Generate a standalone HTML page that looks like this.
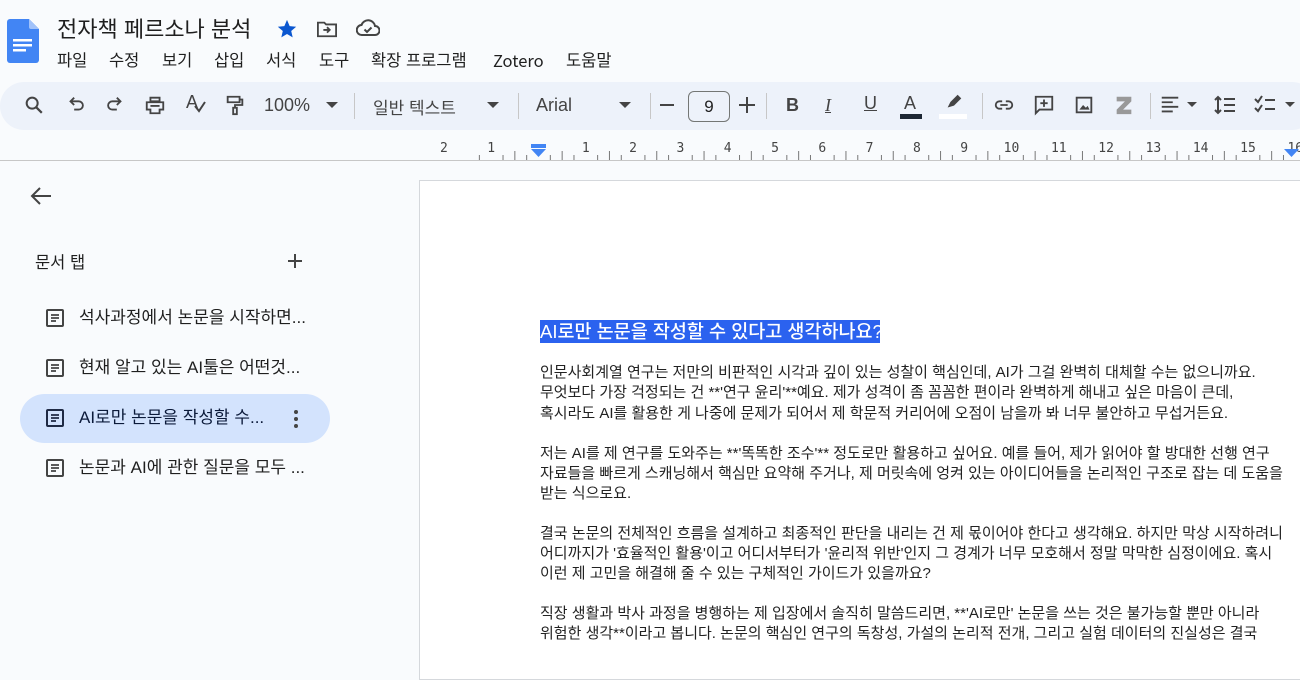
<!DOCTYPE html>
<html><head><meta charset="utf-8"><style>
*{margin:0;padding:0;box-sizing:border-box}
body{width:1300px;height:645px;overflow:hidden;background:#f9fbfd;font-family:"Liberation Sans","Noto Sans CJK KR",sans-serif;color:#1f1f1f;position:relative}
.abs{position:absolute}
.menu span{position:absolute;top:0;font-size:16.5px;line-height:22px;white-space:nowrap}
.tb{position:absolute;left:0;top:82px;width:1316px;height:48px;background:#edf2fa;border-radius:24px}
.ic{position:absolute;top:94px}
.sep{position:absolute;top:93px;width:1px;height:26px;background:#c7c7c7}
.tab{position:absolute;left:45px;font-size:17px;line-height:22px;white-space:nowrap;color:#1f1f1f}
.tab svg{position:absolute;left:0;top:1px}
.tab span{position:absolute;left:34px;top:0}
.ln{position:absolute;left:540px;font-size:15px;white-space:nowrap;letter-spacing:0;color:#222;line-height:20px}
</style></head><body>
<svg class="abs" style="left:7px;top:19px" width="32" height="44" viewBox="0 0 32 44"><path d="M3 0h19l10 10v31a3 3 0 0 1-3 3H3a3 3 0 0 1-3-3V3a3 3 0 0 1 3-3z" fill="#4285f4"/><path d="M22 0v8a2 2 0 0 0 2 2h8z" fill="#a1c2fa"/><rect x="6" y="20" width="19" height="2.5" fill="#fff"/><rect x="6" y="25" width="19" height="2.5" fill="#fff"/><rect x="6" y="30" width="13" height="2.5" fill="#fff"/></svg>
<div class="abs" style="left:57px;top:12px;font-size:22px;white-space:nowrap">전자책 페르소나 분석</div>
<svg class="abs" style="left:276px;top:18px" width="22" height="22" viewBox="0 0 24 24"><path d="M12 2l2.9 6.9 7.1.6-5.4 4.7 1.6 7-6.2-3.8-6.2 3.8 1.6-7L2 9.5l7.1-.6z" fill="#0b57d0"/></svg>
<svg class="abs" style="left:316px;top:19px" width="22" height="20" viewBox="0 0 24 22"><path d="M2 4h7l2 2h11v13H2z" fill="none" stroke="#444" stroke-width="2"/><path d="M8 12h7M12 9l3 3-3 3" fill="none" stroke="#444" stroke-width="2"/></svg>
<svg class="abs" style="left:356px;top:18px" width="24" height="20" viewBox="0 0 24 20"><path d="M6 17a5 5 0 0 1-.5-10A7 7 0 0 1 19 8a4.5 4.5 0 0 1 0 9z" fill="none" stroke="#444" stroke-width="2"/><path d="M8.5 11.5l2.5 2.5 4.5-4.5" fill="none" stroke="#444" stroke-width="2"/></svg>
<div class="menu abs" style="left:0;top:50px;width:700px;height:22px">
<span style="left:57px">파일</span><span style="left:109px">수정</span><span style="left:162px">보기</span><span style="left:214px">삽입</span><span style="left:266px">서식</span><span style="left:319px">도구</span><span style="left:371px">확장 프로그램</span><span style="left:493px;top:-1px;font-family:'Noto Sans CJK KR',sans-serif">Zotero</span><span style="left:566px">도움말</span>
</div>
<div class="tb"></div>
<svg class="ic" style="left:23px" width="22" height="22" viewBox="0 0 24 24"><circle cx="10" cy="10" r="6" fill="none" stroke="#444" stroke-width="2.2"/><path d="M14.5 14.5l6 6" stroke="#444" stroke-width="2.4"/></svg>
<svg class="ic" style="left:65px" width="22" height="22" viewBox="0 0 24 24"><path d="M7 8h8a4.5 4.5 0 0 1 0 9h-5" fill="none" stroke="#444" stroke-width="2"/><path d="M10 4L6 8l4 4" fill="none" stroke="#444" stroke-width="2"/></svg>
<svg class="ic" style="left:104px" width="22" height="22" viewBox="0 0 24 24"><path d="M17 8H9a4.5 4.5 0 0 0 0 9h5" fill="none" stroke="#444" stroke-width="2"/><path d="M14 4l4 4-4 4" fill="none" stroke="#444" stroke-width="2"/></svg>
<svg class="ic" style="left:144px" width="22" height="22" viewBox="0 0 24 24"><path d="M7 4h10v4H7zM3 9h18v8h-4v4H7v-4H3z" fill="none" stroke="#444" stroke-width="2"/><path d="M7 13h10" stroke="#444" stroke-width="2"/></svg>
<div class="abs" style="left:186px;top:92px;font-size:18px;color:#444">A</div>
<svg class="ic" style="left:193px;top:100px" width="14" height="14" viewBox="0 0 14 14"><path d="M2 6l4 5 6-9" fill="none" stroke="#444" stroke-width="2"/></svg>
<svg class="ic" style="left:224px" width="22" height="22" viewBox="0 0 24 24"><path d="M4 3h13v6H4zM17 6h3v6h-8v3" fill="none" stroke="#444" stroke-width="2"/><rect x="10" y="15" width="4" height="7" fill="none" stroke="#444" stroke-width="2"/></svg>
<div class="abs" style="left:264px;top:95px;font-size:18px;color:#444">100%</div>
<svg class="abs" style="left:326px;top:102px" width="12" height="7"><path d="M0 0h12L6 6z" fill="#444"/></svg>
<div class="sep" style="left:354px"></div>
<div class="abs" style="left:373px;top:94px;font-size:17px;color:#444">일반 텍스트</div>
<svg class="abs" style="left:487px;top:102px" width="12" height="7"><path d="M0 0h12L6 6z" fill="#444"/></svg>
<div class="sep" style="left:518px"></div>
<div class="abs" style="left:536px;top:95px;font-size:18px;color:#444">Arial</div>
<svg class="abs" style="left:619px;top:102px" width="12" height="7"><path d="M0 0h12L6 6z" fill="#444"/></svg>
<div class="sep" style="left:650px"></div>
<div class="abs" style="left:660px;top:104px;width:14px;height:2px;background:#444"></div>
<div class="abs" style="left:688px;top:91px;width:42px;height:31px;border:1px solid #747775;border-radius:6px;text-align:center;font-size:17px;line-height:29px;color:#1f1f1f">9</div>
<div class="abs" style="left:739px;top:104px;width:16px;height:2px;background:#444"></div>
<div class="abs" style="left:746px;top:97px;width:2px;height:16px;background:#444"></div>
<div class="sep" style="left:766px"></div>
<div class="abs" style="left:786px;top:95px;font-size:18px;font-weight:bold;color:#444">B</div>
<div class="abs" style="left:825px;top:95px;font-size:18px;font-style:italic;font-family:'Liberation Serif',serif;color:#444;text-decoration:underline">I</div>
<div class="abs" style="left:864px;top:93px;font-size:18px;color:#444;text-decoration:underline">U</div>
<div class="abs" style="left:904px;top:93px;font-size:18px;color:#444">A</div>
<div class="abs" style="left:900px;top:114px;width:22px;height:5px;background:#1d2733"></div>
<svg class="ic" style="left:943px;top:92px" width="22" height="20" viewBox="0 0 24 22"><path d="M5 17l3-6 8-8 4 4-8 8z" fill="#444"/></svg>
<div class="abs" style="left:939px;top:114px;width:28px;height:5px;background:#fff"></div>
<div class="sep" style="left:982px"></div>
<svg class="ic" style="left:993px" width="22" height="22" viewBox="0 0 24 24"><path d="M10 8H7a4 4 0 0 0 0 8h3M14 8h3a4 4 0 0 1 0 8h-3M8 12h8" fill="none" stroke="#444" stroke-width="2"/></svg>
<svg class="ic" style="left:1033px" width="22" height="22" viewBox="0 0 24 24"><path d="M3 3h18v14H7l-4 4z" fill="none" stroke="#444" stroke-width="2"/><path d="M12 6v8M8 10h8" stroke="#444" stroke-width="2"/></svg>
<svg class="ic" style="left:1073px" width="22" height="22" viewBox="0 0 24 24"><rect x="4" y="4" width="16" height="16" fill="none" stroke="#444" stroke-width="2"/><path d="M7 17l4-5 3 3 2-2 2 4z" fill="#444"/></svg>
<svg class="ic" style="left:1113px" width="22" height="22" viewBox="0 0 24 24"><path d="M4 3h16v5l-9 9h9v5H4v-5l9-9H4z" fill="#999"/></svg>
<div class="sep" style="left:1150px"></div>
<svg class="ic" style="left:1159px" width="22" height="22" viewBox="0 0 24 24"><path d="M3 4h18M3 9h12M3 14h18M3 19h12" stroke="#444" stroke-width="2"/></svg>
<svg class="abs" style="left:1187px;top:102px" width="10" height="6"><path d="M0 0h10L5 5z" fill="#444"/></svg>
<svg class="ic" style="left:1213px" width="24" height="22" viewBox="0 0 24 22"><path d="M5 3v16M2 6l3-3 3 3M2 16l3 3 3-3M11 5h11M11 11h11M11 17h11" fill="none" stroke="#444" stroke-width="2"/></svg>
<svg class="ic" style="left:1253px" width="24" height="22" viewBox="0 0 24 22"><path d="M2 5l3 3 4-6M2 14l3 3 4-6M12 6h10M12 15h10" fill="none" stroke="#444" stroke-width="2"/></svg>
<svg class="abs" style="left:1285px;top:102px" width="10" height="6"><path d="M0 0h10L5 5z" fill="#444"/></svg>
<div class="abs" style="left:0;top:160px;width:1300px;height:1px;background:#c7c7c7"></div>
<svg class="abs" style="left:0;top:135px" width="1300" height="26" id="rul"></svg>
<svg class="abs" style="left:30px;top:186px" width="22" height="20" viewBox="0 0 22 20"><path d="M21 10H3M10 2L2 10l8 8" fill="none" stroke="#444" stroke-width="2"/></svg>
<div class="abs" style="left:35px;top:249px;font-size:16.5px">문서 탭</div>
<div class="abs" style="left:288px;top:260px;width:14px;height:2px;background:#444"></div>
<div class="abs" style="left:294px;top:254px;width:2px;height:14px;background:#444"></div>
<div class="abs" style="left:20px;top:394px;width:310px;height:49px;background:#d3e3fd;border-radius:25px"></div>
<div class="tab" style="top:307px"><svg width="20" height="20" viewBox="0 0 20 20"><rect x="2" y="2" width="16" height="16" rx="1" fill="none" stroke="#444" stroke-width="2"/><path d="M6 7h8M6 10h8M6 13h5" stroke="#444" stroke-width="1.8"/></svg><span>석사과정에서 논문을 시작하면...</span></div>
<div class="tab" style="top:357px"><svg width="20" height="20" viewBox="0 0 20 20"><rect x="2" y="2" width="16" height="16" rx="1" fill="none" stroke="#444" stroke-width="2"/><path d="M6 7h8M6 10h8M6 13h5" stroke="#444" stroke-width="1.8"/></svg><span>현재 알고 있는 AI툴은 어떤것...</span></div>
<div class="tab" style="top:407px;color:#0b1a3a"><svg width="20" height="20" viewBox="0 0 20 20"><rect x="2" y="2" width="16" height="16" rx="1" fill="none" stroke="#1f2a44" stroke-width="2"/><path d="M6 7h8M6 10h8M6 13h5" stroke="#1f2a44" stroke-width="1.8"/></svg><span>AI로만 논문을 작성할 수...</span></div>
<svg class="abs" style="left:293px;top:409px" width="6" height="20"><circle cx="3" cy="3" r="2" fill="#444"/><circle cx="3" cy="10" r="2" fill="#444"/><circle cx="3" cy="17" r="2" fill="#444"/></svg>
<div class="tab" style="top:457px"><svg width="20" height="20" viewBox="0 0 20 20"><rect x="2" y="2" width="16" height="16" rx="1" fill="none" stroke="#444" stroke-width="2"/><path d="M6 7h8M6 10h8M6 13h5" stroke="#444" stroke-width="1.8"/></svg><span>논문과 AI에 관한 질문을 모두 ...</span></div>
<div class="abs" style="left:419px;top:180px;width:900px;height:500px;background:#fff;border:1px solid #d5d8dc"></div>
<div class="abs" style="left:540px;top:320px;width:340px;height:23px;background:#2b62ef"></div>
<div class="abs" style="left:540px;top:320px;font-size:18.5px;color:#fff;white-space:nowrap;line-height:23px;font-weight:500">AI로만 논문을 작성할 수 있다고 생각하나요?</div>
<div class="ln" style="top:363px">인문사회계열 연구는 저만의 비판적인 시각과 깊이 있는 성찰이 핵심인데, AI가 그걸 완벽히 대체할 수는 없으니까요.</div>
<div class="ln" style="top:383px">무엇보다 가장 걱정되는 건 **'연구 윤리'**예요. 제가 성격이 좀 꼼꼼한 편이라 완벽하게 해내고 싶은 마음이 큰데,</div>
<div class="ln" style="top:404px">혹시라도 AI를 활용한 게 나중에 문제가 되어서 제 학문적 커리어에 오점이 남을까 봐 너무 불안하고 무섭거든요.</div>
<div class="ln" style="top:444px">저는 AI를 제 연구를 도와주는 **'똑똑한 조수'** 정도로만 활용하고 싶어요. 예를 들어, 제가 읽어야 할 방대한 선행 연구</div>
<div class="ln" style="top:464px">자료들을 빠르게 스캐닝해서 핵심만 요약해 주거나, 제 머릿속에 엉켜 있는 아이디어들을 논리적인 구조로 잡는 데 도움을</div>
<div class="ln" style="top:484px">받는 식으로요.</div>
<div class="ln" style="top:524px">결국 논문의 전체적인 흐름을 설계하고 최종적인 판단을 내리는 건 제 몫이어야 한다고 생각해요. 하지만 막상 시작하려니</div>
<div class="ln" style="top:544px">어디까지가 '효율적인 활용'이고 어디서부터가 '윤리적 위반'인지 그 경계가 너무 모호해서 정말 막막한 심정이에요. 혹시</div>
<div class="ln" style="top:564px">이런 제 고민을 해결해 줄 수 있는 구체적인 가이드가 있을까요?</div>
<div class="ln" style="top:604px">직장 생활과 박사 과정을 병행하는 제 입장에서 솔직히 말씀드리면, **'AI로만' 논문을 쓰는 것은 불가능할 뿐만 아니라</div>
<div class="ln" style="top:624px">위험한 생각**이라고 봅니다. 논문의 핵심인 연구의 독창성, 가설의 논리적 전개, 그리고 실험 데이터의 진실성은 결국</div>
<script>
var s=document.getElementById('rul'),h='',u=47.3,z=538.5;
for(var i=-5;i<=70;i++){var x=z+i*u/4;if(x<420||x>1300)continue;var q=((i%4)+4)%4;
var len=q==2?9:5;if(q==0)continue;h+='<line x1="'+x+'" x2="'+x+'" y1="'+(25-len)+'" y2="25" stroke="#777" stroke-width="1"/>';}
for(var n=-2;n<=16;n++){if(n==0)continue;var x=z+n*u;h+='<text x="'+x+'" y="17" font-size="13" fill="#444" text-anchor="middle" font-family="DejaVu Sans Mono,monospace">'+Math.abs(n)+'</text>';}
h+='<rect x="531" y="9" width="15" height="4" fill="#4285f4"/><path d="M531 14h15l-7.5 8z" fill="#4285f4"/><path d="M1284 14h15l-7.5 8z" fill="#4285f4"/>';
s.innerHTML=h;
</script>
</body></html>
